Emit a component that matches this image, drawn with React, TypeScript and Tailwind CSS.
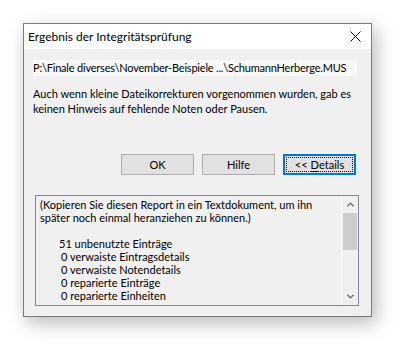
import { ChevronUp, ChevronDown } from 'lucide-react';

function CloseIcon() {
  return (
    <svg width="11" height="11" viewBox="0 0 11 11" className="block">
      <path d="M0.5 0.5 L10.5 10.5 M10.5 0.5 L0.5 10.5" stroke="#000" strokeWidth="1" fill="none" />
    </svg>
  );
}

function Button({ children, isDefault }: { children: React.ReactNode; isDefault?: boolean }) {
  if (isDefault) {
    return (
      <button className="w-[73px] h-[21px] border-2 border-[#0078d7] bg-[#e1e1e1] p-[1px]">
        <span className="flex items-center justify-center w-full h-full border border-dotted border-black leading-none">
          {children}
        </span>
      </button>
    );
  }
  return (
    <button className="flex items-center justify-center w-[73px] h-[21px] border border-[#adadad] bg-[#e1e1e1] leading-none">
      {children}
    </button>
  );
}

export default function App() {
  return (
    <div
      className="w-[405px] h-[348px] bg-white pt-[23px] pl-[23px] text-[11px] text-black whitespace-nowrap"
      style={{ fontFamily: 'Lato, "Liberation Sans", sans-serif' }}
    >
      <div className="flex flex-col w-[349px] h-[294px] border border-[#7a7a7a] bg-[#f0f0f0] shadow-[4px_6px_18px_rgba(0,0,0,0.28)]">
        <div className="flex items-center justify-between h-[25px] bg-white pl-[4px] pr-[10px] text-[12px]">
          <span>Ergebnis der Integritätsprüfung</span>
          <CloseIcon />
        </div>

        <div className="flex flex-col flex-1 px-[9px]">
          <div className="mt-[11px] h-[16px] w-[324px] bg-[#f8f8f8] leading-[16px] tracking-[-0.2px]">
            P:\Finale diverses\November-Beispiele ...\SchumannHerberge.MUS
          </div>

          <p className="mt-[10px] leading-[15px]">
            Auch wenn kleine Dateikorrekturen vorgenommen wurden, gab es
            <br />
            keinen Hinweis auf fehlende Noten oder Pausen.
          </p>

          <div className="flex justify-end gap-[8px] mt-[38px] pr-[6px]">
            <Button>OK</Button>
            <Button>Hilfe</Button>
            <Button isDefault>
              &lt;&lt; <span className="underline underline-offset-2 ml-[3px]">D</span>etails
            </Button>
          </div>

          <div className="flex mt-[20px] ml-[2px] mr-[3px] h-[111px] border border-[#828790]">
            <div className="flex-1 pl-[4px] pt-[2px] leading-[13px] overflow-hidden">
              <div>(Kopieren Sie diesen Report in ein Textdokument, um ihn</div>
              <div>später noch einmal heranziehen zu können.)</div>
              <div className="h-[13px]" />
              <div className="pl-[19px]">51 unbenutzte Einträge</div>
              <div className="pl-[21px]">0 verwaiste Eintragsdetails</div>
              <div className="pl-[21px]">0 verwaiste Notendetails</div>
              <div className="pl-[21px]">0 reparierte Einträge</div>
              <div className="pl-[21px]">0 reparierte Einheiten</div>
            </div>
            <div className="flex flex-col w-[17px] border-l border-[#f8f8f8] bg-[#f0f0f0]">
              <div className="flex items-center justify-center h-[17px] text-[#606060]">
                <ChevronUp size={11} strokeWidth={3} />
              </div>
              <div className="h-[37px] mx-[1px] bg-[#cdcdcd]" />
              <div className="flex-1" />
              <div className="flex items-center justify-center h-[17px] text-[#606060]">
                <ChevronDown size={11} strokeWidth={3} />
              </div>
            </div>
          </div>
        </div>
      </div>
    </div>
  );
}
